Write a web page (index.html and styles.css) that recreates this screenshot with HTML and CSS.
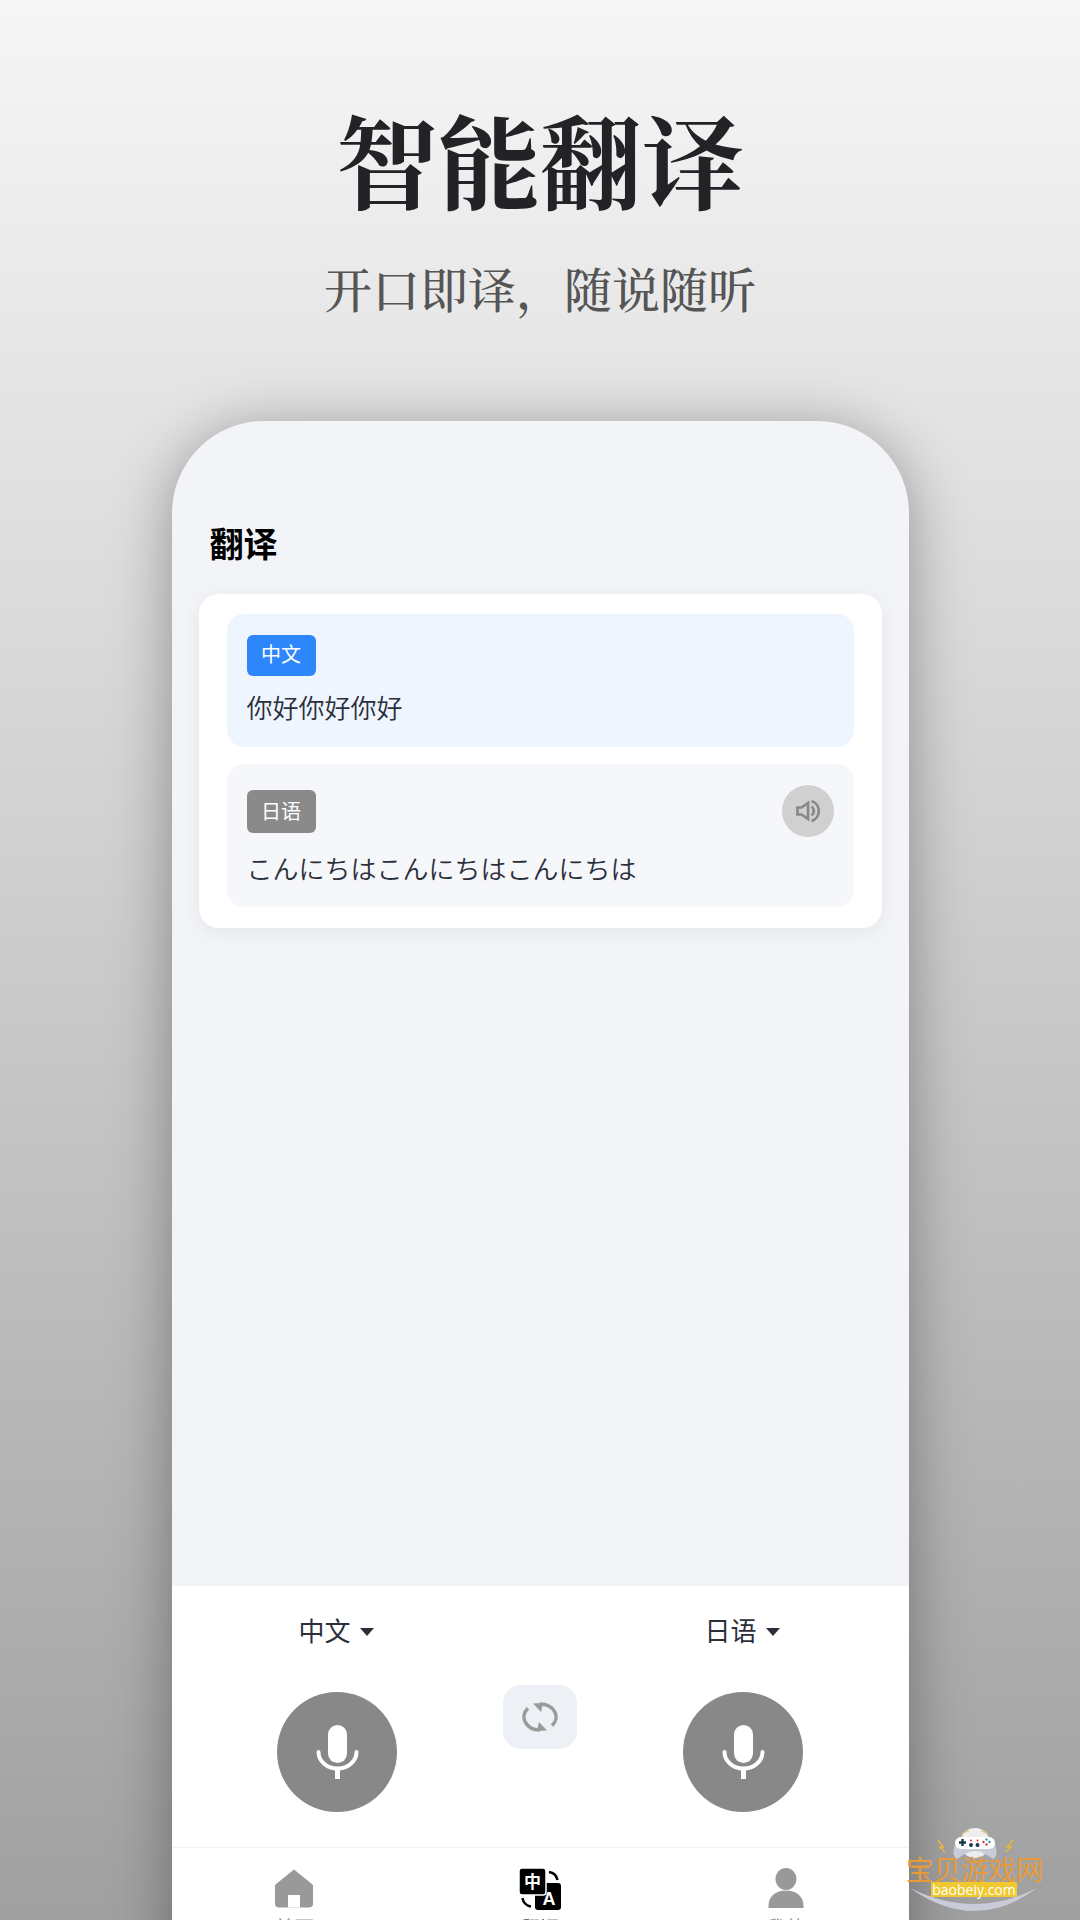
FILE: index.html
```html
<!DOCTYPE html>
<html lang="zh-CN">
<head>
  <meta charset="UTF-8" />
  <meta name="viewport" content="width=device-width, initial-scale=1.0" />
  <title>智能翻译</title>
  <link rel="stylesheet" href="styles.css">
</head>
<body>
  <header class="promo">
    <h1>智能翻译</h1>
    <p>开口即译，随说随听</p>
  </header>

  <div class="phone">
    <main class="screen">
      <h2 class="screen-title">翻译</h2>
      <section class="card">
        <div class="box box-source">
          <span class="tag tag-blue">中文</span>
          <p class="box-text">你好你好你好</p>
        </div>
        <div class="box box-target">
          <div class="box-head">
            <span class="tag tag-grey">日语</span>
            <button class="speaker">
              <svg width="24" height="24" viewBox="0 0 24 24" fill="none" stroke="#888" stroke-width="2.7">
                <path d="M1.5 8.5H5.5L12 4V20L5.5 15.5H1.5Z" />
                <path d="M15.500 7.500A5.500 5.500 0 0 1 15.500 16.500" />
                <path d="M15.500 2A10.500 10.500 0 0 1 15.500 22" />
              </svg>
            </button>
          </div>
          <p class="box-text box-text-ja" lang="ja">こんにちはこんにちはこんにちは</p>
        </div>
      </section>
    </main>

    <section class="controls">
      <div class="speak-col">
        <div class="lang">中文<span class="caret"></span></div>
        <button class="mic">
          <svg width="120" height="120" viewBox="0 0 120 120" fill="none">
            <rect x="51" y="33" width="19" height="38" rx="9.500" fill="#fff" />
            <path d="M41.500 60A19 16.500 0 0 0 79.500 60" stroke="#fff" stroke-width="4" stroke-linecap="round" />
            <path d="M60.500 76V87" stroke="#fff" stroke-width="5" />
          </svg>
        </button>
      </div>
      <button class="swap">
        <svg width="36" height="30" viewBox="0 0 36 30" fill="none" stroke="#9a9a9a" stroke-width="3.500">
          <path d="M18 2A16 13 0 0 1 30 23.600" />
          <path d="M18 28A16 13 0 0 1 6 6.400" />
          <polygon points="11,1.500 21,1 19,10" fill="#9a9a9a" stroke="none" />
          <polygon points="25,28.500 15,29 17,20" fill="#9a9a9a" stroke="none" />
        </svg>
      </button>
      <div class="speak-col">
        <div class="lang">日语<span class="caret"></span></div>
        <button class="mic">
          <svg width="120" height="120" viewBox="0 0 120 120" fill="none">
            <rect x="51" y="33" width="19" height="38" rx="9.500" fill="#fff" />
            <path d="M41.500 60A19 16.500 0 0 0 79.500 60" stroke="#fff" stroke-width="4" stroke-linecap="round" />
            <path d="M60.500 76V87" stroke="#fff" stroke-width="5" />
          </svg>
        </button>
      </div>
    </section>

    <nav class="tabs">
      <a class="tab">
        <svg width="42" height="42" viewBox="0 0 42 42">
          <path d="M21 2L39.500 17V36Q39.500 39 36.500 39H5.500Q2.500 39 2.500 36V17Z" fill="#999" stroke="#999" stroke-linejoin="round" />
          <rect x="15" y="27" width="12" height="12.500" fill="#fff" />
        </svg>
        <span>首页</span>
      </a>
      <a class="tab tab-active">
        <svg width="42" height="42" viewBox="0 0 42 42">
          <path d="M30 4A10 10 0 0 1 38.500 12" fill="none" stroke="#000" stroke-width="2.500" />
          <path d="M3.500 30A10 10 0 0 0 12 38.500" fill="none" stroke="#000" stroke-width="2.500" />
          <rect x="16" y="15" width="26" height="27" rx="3" fill="#000" />
          <rect x="0" y="0" width="27" height="27" rx="3" fill="#000" stroke="#fff" stroke-width="1.500" />
          <text x="13.500" y="19.500" class="glyph-zh">中</text>
          <text x="30" y="37" class="glyph-en">A</text>
        </svg>
        <span>翻译</span>
      </a>
      <a class="tab">
        <svg width="42" height="42" viewBox="0 0 42 42">
          <ellipse cx="21" cy="11" rx="10.500" ry="11" fill="#999" />
          <path d="M3.500 40V38C3.500 28 11 22.500 21 22.500S38.500 28 38.500 38V40Z" fill="#999" />
        </svg>
        <span>我的</span>
      </a>
    </nav>
  </div>

  <!-- site watermark in the corner of the shot -->
  <div class="watermark">
    <svg class="wm-art" width="140" height="90" viewBox="0 0 140 90" fill="none">
      <circle cx="70" cy="17" r="15" fill="#eeeeee" />
      <path d="M57 9Q60 5 64 5M76 5Q80 5 83 9" stroke="#e3c98c" stroke-width="1.500" />
      <path d="M50 18Q46 30 52 33L60 28Q70 22 80 28L88 33Q94 30 90 18Z" fill="#c9ccd6" />
      <rect x="50" y="11" width="40" height="12" rx="6" fill="#fff" />
      <path d="M54 16.500H61M57.500 13V20" stroke="#1d3a4a" stroke-width="2.500" />
      <circle cx="66" cy="14.500" r="1" fill="#d33" />
      <circle cx="72.500" cy="14.500" r="1" fill="#d33" />
      <circle cx="66" cy="19" r="2" fill="#1d3a4a" />
      <circle cx="72.500" cy="19" r="2" fill="#1d3a4a" />
      <circle cx="81.500" cy="13.500" r="1.200" fill="#2fa7a0" />
      <circle cx="78.500" cy="16" r="1.200" fill="#d33" />
      <circle cx="84.500" cy="16" r="1.200" fill="#2b8ac6" />
      <circle cx="81.500" cy="18.500" r="1.200" fill="#d33" />
      <path d="M33 14L38 21L35 21L40 26" stroke="#e6b93c" stroke-width="1.500" />
      <path d="M108 14L102 21L106 21L101 26" stroke="#e6b93c" stroke-width="1.500" />
      <path d="M5 62Q70 108 132 62Q70 94 5 62Z" fill="#c9ccd8" />
    </svg>
    <div class="wm-name">宝贝游戏网</div>
    <div class="wm-url">baobeiy.com</div>
  </div>
</body>
</html>
```

FILE: styles.css
```css
* {
  box-sizing: border-box;
}
html, body {
  margin: 0;
  padding: 0;
  height: 1920px;
  overflow: hidden;
}
body {
  width: 1080px;
  display: flex;
  flex-direction: column;
  align-items: center;
  background: linear-gradient(180deg, #f6f6f6 0%, #a0a0a0 100%);
  font-family: "Noto Sans CJK SC", "Noto Sans", sans-serif;
  position: relative;
}

.promo {
  padding-top: 98px;
  text-align: center;
  font-family: "Noto Serif CJK SC", "Noto Sans CJK SC", serif;
}
.promo h1 {
  margin: 0;
  font-size: 102px;
  line-height: 120px;
  font-weight: 700;
  color: #232327;
}
.promo p {
  margin: 40px 0 0;
  font-size: 48px;
  line-height: 60px;
  font-weight: 500;
  color: #555;
}

.phone {
  width: 737px;
  height: 1550px;
  margin-top: 103px;
  flex-shrink: 0;
  display: flex;
  flex-direction: column;
  background: #f3f4f8;
  border-radius: 92px 92px 0 0;
  box-shadow: 0 8px 60px rgba(0, 0, 0, 0.35);
  overflow: hidden;
}

.screen {
  flex: 1;
  padding: 96px 27px 0;
}
.screen-title {
  margin: 0 0 26px 11px;
  font-size: 34px;
  line-height: 51px;
  font-weight: 700;
  color: #000;
}

.card {
  background: #fff;
  border-radius: 20px;
  padding: 20px 28px 21px;
  box-shadow: 0 4px 20px rgba(0, 0, 0, 0.06);
  display: flex;
  flex-direction: column;
  gap: 17px;
}
.box {
  border-radius: 17px;
  padding: 21px 20px 20px;
}
.box-source {
  background: #eef5ff;
}
.box-target {
  background: #f6f7fa;
  padding-bottom: 21px;
}
.box-head {
  display: flex;
  justify-content: space-between;
  align-items: center;
}
.box-text {
  margin: 13px 0 2px;
  font-size: 26px;
  line-height: 36px;
  font-weight: 350;
  color: #2b2f3a;
}
.box-text-ja {
  margin: 13px 0 0;
  font-family: "Noto Sans CJK JP", sans-serif;
}

.tag {
  display: block;
  width: 69px;
  height: 41px;
  border-radius: 6px;
  text-align: center;
  font-size: 20px;
  line-height: 38px;
  color: #fff;
}
.tag-blue {
  background: #2e86fb;
}
.tag-grey {
  height: 43px;
  line-height: 42px;
  background: #8a8a8a;
}
.speaker {
  width: 52px;
  height: 52px;
  padding: 0;
  border: none;
  border-radius: 50%;
  background: #d0d0d0;
  display: flex;
  align-items: center;
  justify-content: center;
}

.controls {
  height: 261px;
  padding-top: 26px;
  background: #fff;
  display: flex;
  justify-content: center;
  align-items: flex-start;
}
.speak-col {
  width: 203px;
  display: flex;
  flex-direction: column;
  align-items: center;
}
.lang {
  height: 36px;
  margin-right: 2px;
  display: flex;
  align-items: center;
  gap: 9px;
  font-size: 26px;
  line-height: 36px;
  color: #2b2f3a;
}
.caret {
  width: 0;
  height: 0;
  margin-top: 4px;
  border-left: 7px solid transparent;
  border-right: 7px solid transparent;
  border-top: 8px solid #2b2f3a;
}
.mic {
  width: 120px;
  height: 120px;
  margin-top: 44px;
  padding: 0;
  border: none;
  border-radius: 50%;
  background: #888;
}
.mic svg {
  display: block;
}
.swap {
  width: 74px;
  height: 64px;
  margin: 73px 64.5px 0;
  padding: 0;
  flex-shrink: 0;
  border: none;
  border-radius: 18px;
  background: #edf0f5;
  display: flex;
  align-items: center;
  justify-content: center;
}

.tabs {
  height: 124px;
  flex-shrink: 0;
  display: flex;
  background: #fff;
  border-top: 1px solid #f3f3f3;
  padding-top: 20px;
}
.tab {
  flex: 1;
  display: flex;
  flex-direction: column;
  align-items: center;
  font-size: 20px;
  line-height: 28px;
  color: #999;
}
.tab-active {
  color: #000;
}
.tab svg {
  display: block;
  margin-bottom: 4px;
}
.glyph-zh {
  font-size: 17px;
  font-weight: 700;
  fill: #fff;
  text-anchor: middle;
}
.glyph-en {
  font-family: "Liberation Sans", sans-serif;
  font-size: 18px;
  font-weight: 700;
  fill: #fff;
  text-anchor: middle;
}

.watermark {
  position: absolute;
  left: 905px;
  top: 1826px;
  width: 140px;
  height: 90px;
}
.wm-art {
  position: absolute;
  left: 0;
  top: 0;
}
.wm-name {
  position: absolute;
  left: 1px;
  top: 29px;
  font-size: 27.500px;
  line-height: 27px;
  white-space: nowrap;
  color: #e89a3a;
}
.wm-url {
  position: absolute;
  left: 26px;
  top: 56px;
  width: 86px;
  height: 15px;
  background: #efc92f;
  text-align: center;
  font-family: "Open Sans", sans-serif;
  font-size: 14px;
  line-height: 15px;
  color: #fff;
}
```
